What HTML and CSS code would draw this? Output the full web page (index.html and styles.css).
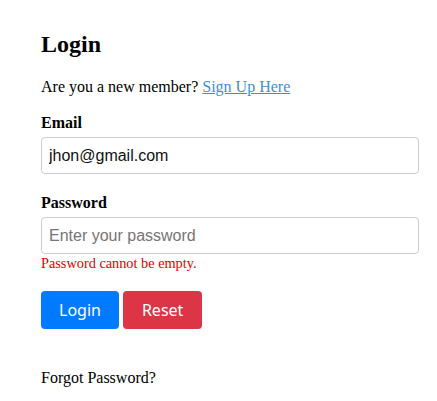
FILE: index.html
```html
<!DOCTYPE html>
<html>
<head>
<meta charset="utf-8">
<link rel="stylesheet" href="styles.css">
</head>
<body>
<div class="page">
  <h2 class="title">Login</h2>
  <p class="intro">Are you a new member? <a href="#" class="link">Sign Up Here</a></p>
  <label class="label first">Email</label>
  <input class="field" type="text" value="jhon@gmail.com">
  <label class="label">Password</label>
  <input class="field" type="password" placeholder="Enter your password">
  <div class="error">Password cannot be empty.</div>
  <div class="actions">
    <button class="btn btn-primary">Login</button>
    <button class="btn btn-danger">Reset</button>
  </div>
  <p class="forgot">Forgot Password?</p>
</div>
</body>
</html>
```
FILE: styles.css
```css
html, body {
  margin: 0;
  background: #fff;
}
.page {
  padding: 30px 18px 20px 41px;
  font-family: "Liberation Serif", "Times New Roman", serif;
  font-size: 16px;
  color: #000;
  display: flex;
  flex-direction: column;
  align-items: flex-start;
}
.title {
  margin: 0 0 20px;
  font-size: 24px;
  line-height: 28px;
  font-weight: bold;
}
.intro {
  margin: 0;
  line-height: 18px;
}
.link {
  color: #3b8fdb;
  text-decoration: underline;
}
.label {
  display: block;
  font-weight: bold;
  line-height: 18px;
  margin-top: 20px;
  margin-bottom: 5px;
}
.label.first {
  margin-top: 18px;
}
.field {
  box-sizing: border-box;
  width: 378px;
  height: 37px;
  margin: 0;
  padding: 0 7px;
  border: 1px solid #ccc;
  border-radius: 4px;
  font-family: "Liberation Sans", Arial, sans-serif;
  font-size: 16px;
  color: #111;
  background: #fff;
  outline: none;
}
.field::placeholder {
  color: #757575;
}
.error {
  margin-top: 1px;
  font-size: 14.3px;
  line-height: 16px;
  color: #e00000;
}
.actions {
  display: flex;
  gap: 4px;
  margin-top: 20px;
}
.btn {
  box-sizing: border-box;
  height: 38px;
  padding: 0 18px;
  border: none;
  border-radius: 4px;
  font-family: "Noto Sans", "Open Sans", sans-serif;
  font-size: 16px;
  color: #fff;
  cursor: pointer;
}
.btn-primary {
  background: #007bff;
}
.btn-danger {
  background: #dc3545;
}
.btn-danger {
  padding: 0 19px;
}
.forgot {
  margin: 40px 0 0;
  line-height: 18px;
}
```
